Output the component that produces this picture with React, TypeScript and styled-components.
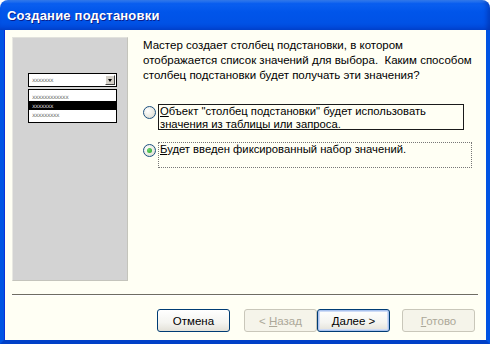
import styled, { createGlobalStyle } from "styled-components";

const GlobalStyle = createGlobalStyle`
  html, body {
    margin: 0;
    padding: 0;
    background: #ffffff;
  }
  body {
    font-family: "Liberation Sans", Arial, sans-serif;
  }
`;

const Window = styled.div`
  width: 490px;
  height: 344px;
  display: flex;
  flex-direction: column;
  box-sizing: border-box;
  overflow: hidden;
`;

const TitleBar = styled.div`
  height: 30px;
  flex: none;
  display: flex;
  align-items: center;
  padding-left: 7px;
  border-radius: 8px 8px 0 0;
  background: linear-gradient(
    to bottom,
    #3a8cff 0%,
    #0a5ff0 12%,
    #0055ea 40%,
    #0052e6 75%,
    #0048d8 100%
  );
  box-shadow: inset -3px 0 4px rgba(0, 20, 120, 0.35);
`;

const Title = styled.span`
  color: #ffffff;
  font-family: "Liberation Sans", Arial, sans-serif;
  font-weight: bold;
  font-size: 13px;
  letter-spacing: 0.2px;
  text-shadow: 1px 1px 0 #0a1e8c;
`;

const Frame = styled.div`
  flex: 1;
  min-width: 0;
  display: flex;
  flex-direction: column;
  background: #fffff4;
  border-left: 4px solid #0054e3;
  border-right: 4px solid #0054e3;
  border-bottom: 4px solid #0040c8;
  box-shadow: inset 1px 0 0 #0831d9;
`;

const Content = styled.div`
  display: flex;
  gap: 15px;
  padding: 7px 0 0 8px;
  height: 244px;
`;

const Preview = styled.div`
  width: 116px;
  height: 244px;
  flex: none;
  box-sizing: border-box;
  background: #d3d3d3;
  border: 1px solid #c4c4bc;
  border-top-color: #e2e2dc;
  border-left-color: #e8e8e2;
  padding: 35px 0 0 15px;
`;

const Combo = styled.div`
  width: 89px;
  height: 14px;
  box-sizing: border-box;
  border: 1px solid #000;
  background: #fff;
  display: flex;
  align-items: center;
  justify-content: space-between;
  padding: 0 1px 0 3px;
`;

const Dummy = styled.span<{ $light?: boolean }>`
  font-family: "DejaVu Sans Mono", monospace;
  font-size: 6px;
  line-height: 8px;
  letter-spacing: -0.6px;
  color: ${(p) => (p.$light ? "#d8d8d8" : "#6a6a6a")};
`;

const ArrowButton = styled.div`
  width: 10px;
  height: 10px;
  box-sizing: border-box;
  background: #d4d0c8;
  border: 1px solid;
  border-color: #fff #404040 #404040 #fff;
  display: flex;
  align-items: center;
  justify-content: center;
  &::after {
    content: "";
    border-left: 2.5px solid transparent;
    border-right: 2.5px solid transparent;
    border-top: 3px solid #000;
  }
`;

const DropList = styled.div`
  width: 89px;
  margin-top: 2px;
  box-sizing: border-box;
  border: 1px solid #000;
  background: #fff;
  padding: 2px 0 3px;
  display: flex;
  flex-direction: column;
`;

const DropItem = styled.div<{ $selected?: boolean }>`
  height: 9px;
  padding-left: 3px;
  display: flex;
  align-items: center;
  background: ${(p) => (p.$selected ? "#000" : "transparent")};
`;

const Side = styled.div`
  display: flex;
  flex-direction: column;
  padding-top: 1px;
`;

const Intro = styled.p`
  margin: 0;
  font-size: 11.5px;
  line-height: 15px;
  color: #000;
  white-space: nowrap;
`;

const Options = styled.div`
  display: flex;
  flex-direction: column;
  gap: 12px;
  margin-top: 21px;
`;

const OptionRow = styled.label`
  display: flex;
  align-items: flex-start;
  gap: 2px;
`;

const Radio = styled.span<{ $checked?: boolean }>`
  width: 13px;
  height: 13px;
  margin-top: 2px;
  flex: none;
  box-sizing: border-box;
  border-radius: 50%;
  border: 1px solid #1c5180;
  background: radial-gradient(circle at 35% 35%, #ffffff 0%, #e8e8e0 60%, #d6d3c8 100%);
  display: flex;
  align-items: center;
  justify-content: center;
  &::after {
    content: "";
    display: ${(p) => (p.$checked ? "block" : "none")};
    width: 5px;
    height: 5px;
    border-radius: 50%;
    background: radial-gradient(circle at 35% 35%, #6fd66f, #21a121);
  }
`;

const OptionText = styled.span<{ $width: number; $focus?: boolean }>`
  width: ${(p) => p.$width}px;
  height: 26px;
  box-sizing: border-box;
  border: 1px ${(p) => (p.$focus ? "dotted #777" : "solid #1a1a1a")};
  padding: 0 1px;
  font-size: 11.25px;
  line-height: 13px;
  color: #000;
  white-space: nowrap;
`;

const Separator = styled.div`
  margin: 13px 8px 0 8px;
  height: 1px;
  background: #6f6d62;
  border-bottom: 1px solid #ffffff;
`;

const ButtonBar = styled.div`
  display: flex;
  justify-content: flex-end;
  padding: 13px 11px 0 0;
`;

const Button = styled.button<{ $disabled?: boolean; $default?: boolean; $gap: number }>`
  margin-left: ${(p) => p.$gap}px;
  width: 73px;
  height: 23px;
  box-sizing: border-box;
  border-radius: 3px;
  border: 1px solid ${(p) => (p.$disabled ? "#c9c7ba" : "#003c74")};
  background: ${(p) =>
    p.$disabled
      ? "#f5f4ea"
      : "linear-gradient(to bottom, #ffffff 0%, #f4f4f0 60%, #e3e1d8 100%)"};
  box-shadow: ${(p) =>
    p.$default ? "inset 0 0 0 1px #a9c2ee, inset 0 0 0 2px #cfdcf6" : "none"};
  color: ${(p) => (p.$disabled ? "#aca899" : "#000")};
  font-family: "Liberation Sans", Arial, sans-serif;
  font-size: 11.5px;
  padding: 0;
  cursor: default;
`;

const U = styled.span`
  text-decoration: underline;
`;

export default function App() {
  return (
    <>
      <GlobalStyle />
      <Window>
        <TitleBar>
          <Title>Создание подстановки</Title>
        </TitleBar>
        <Frame>
          <Content>
            <Preview>
              <Combo>
                <Dummy>xxxxxxx</Dummy>
                <ArrowButton />
              </Combo>
              <DropList>
                <DropItem>
                  <Dummy>xxxxxxxxxxxx</Dummy>
                </DropItem>
                <DropItem $selected>
                  <Dummy $light>xxxxxxx</Dummy>
                </DropItem>
                <DropItem>
                  <Dummy>xxxxxxxxx</Dummy>
                </DropItem>
              </DropList>
            </Preview>
            <Side>
              <Intro>
                Мастер создает столбец подстановки, в котором
                <br />
                отображается список значений для выбора.&nbsp; Каким способом
                <br />
                столбец подстановки будет получать эти значения?
              </Intro>
              <Options>
                <OptionRow>
                  <Radio />
                  <OptionText $width={306}>
                    <U>О</U>бъект "столбец подстановки" будет использовать
                    <br />
                    значения из таблицы или запроса.
                  </OptionText>
                </OptionRow>
                <OptionRow>
                  <Radio $checked />
                  <OptionText $width={314} $focus>
                    <U>Б</U>удет введен фиксированный набор значений.
                  </OptionText>
                </OptionRow>
              </Options>
            </Side>
          </Content>
          <Separator />
          <ButtonBar>
            <Button $gap={0}>Отмена</Button>
            <Button $gap={14} $disabled>
              &lt; <U>Н</U>азад
            </Button>
            <Button $gap={0} $default>
              <U>Д</U>алее &gt;
            </Button>
            <Button $gap={12} $disabled>
              <U>Г</U>отово
            </Button>
          </ButtonBar>
        </Frame>
      </Window>
    </>
  );
}
